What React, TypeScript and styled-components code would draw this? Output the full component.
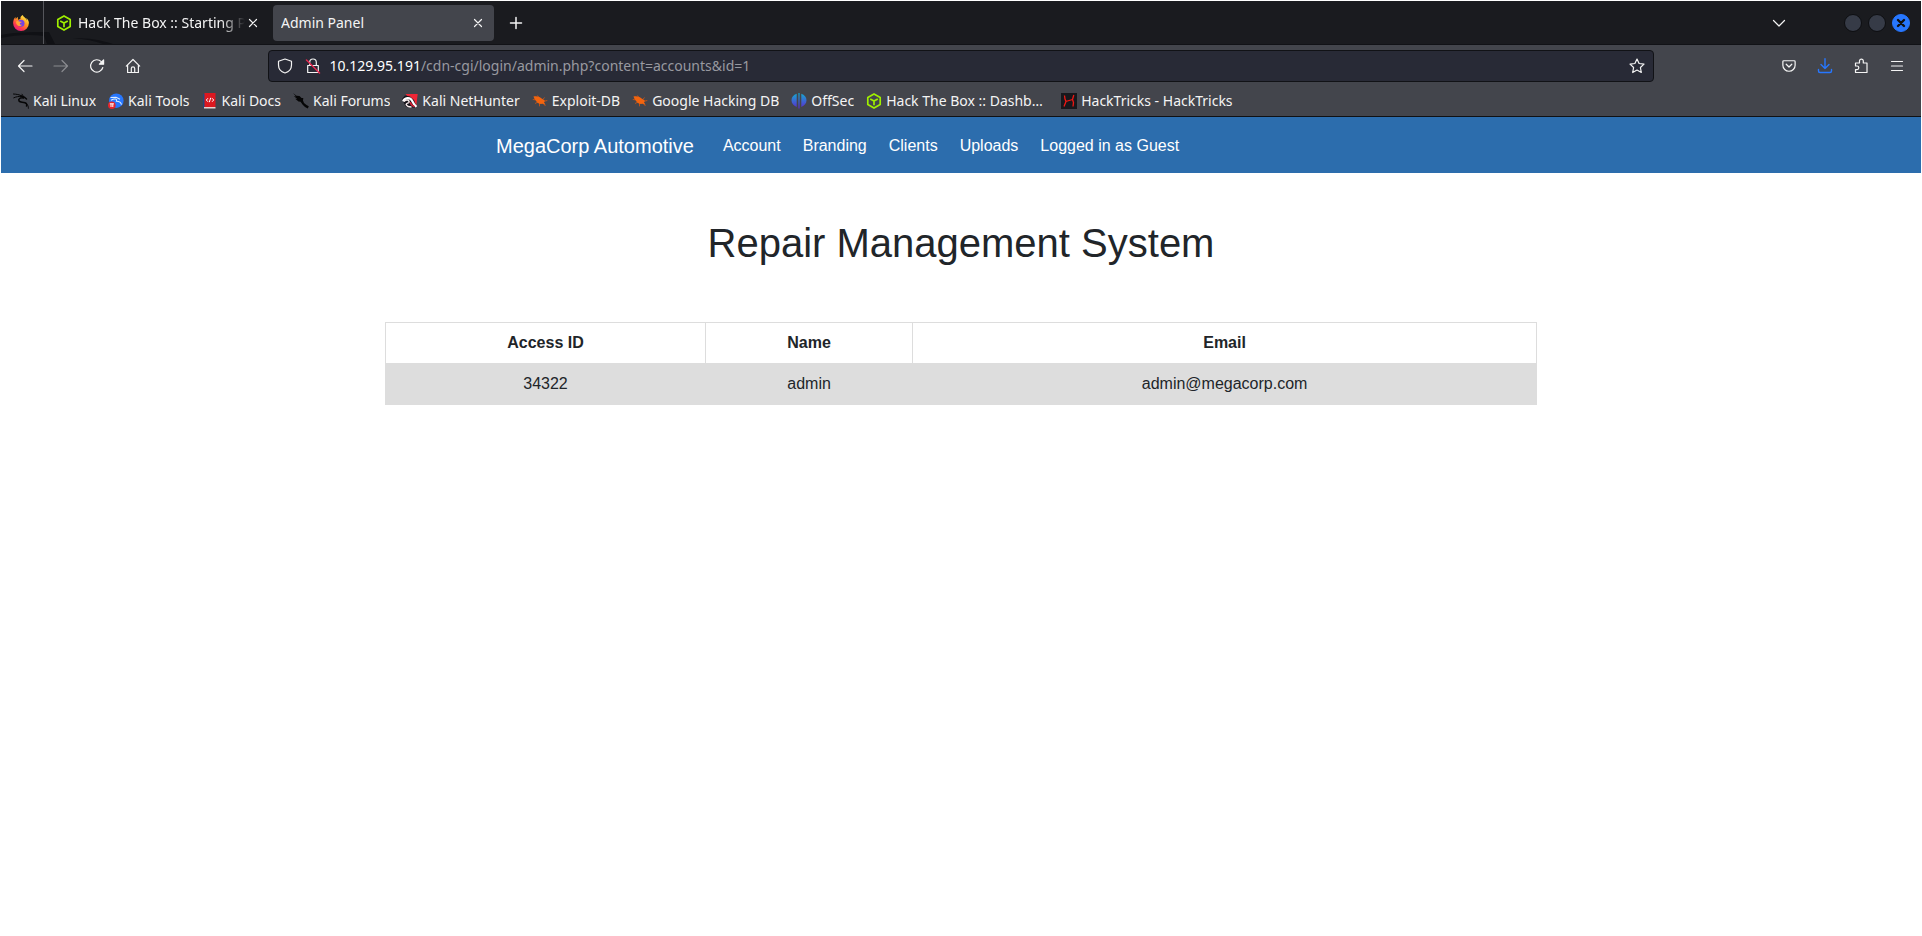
import React from "react";
import styled, { createGlobalStyle, css } from "styled-components";

const GlobalStyle = createGlobalStyle`
  *, *::before, *::after { box-sizing: border-box; }
  body { margin: 0; background: #fff; }
  button { border: 0; padding: 0; margin: 0; background: none; color: inherit; font: inherit; }
  a { color: inherit; text-decoration: none; }
`;

/* ---------- browser window ---------- */

const BrowserWindow = styled.div`
  min-height: 100vh;
  padding: 1px;
  background: #fff;
`;

const Chrome = styled.header`
  color: #f4f4f4;
  font: 14px/20px "Noto Sans", sans-serif;
  background: #43454c;
  border-bottom: 1px solid #101114;
`;

const TabStrip = styled.div`
  position: relative;
  display: flex;
  align-items: center;
  height: 44px;
  background: #1a1b1f;
  border-bottom: 1px solid #111216;
`;

const ThemeArt = styled.svg`
  position: absolute;
  left: 0;
  top: 28px;
  width: 140px;
  height: 15px;
`;

const PinnedTab = styled.button`
  position: relative;
  display: flex;
  align-items: center;
  justify-content: center;
  width: 43px;
  height: 43px;
  padding-right: 2px;
  margin-right: 4px;
  border-right: 1px solid #55565b;
`;

const Tab = styled.div<{ $active?: boolean }>`
  position: relative;
  display: flex;
  align-items: center;
  width: 221px;
  height: 36px;
  margin-right: 4px;
  padding: 0 8px;
  border-radius: 4px;
  ${(p) => p.$active && css`background: #43454c;`}
`;

const TabTitle = styled.button<{ $fade?: boolean }>`
  flex: 1;
  min-width: 0;
  margin-left: ${(p) => (p.$fade ? 6 : 0)}px;
  overflow: hidden;
  white-space: nowrap;
  text-align: left;
  ${(p) => p.$fade && css`mask-image: linear-gradient(to left, transparent, #000 24px);`}
`;

const IconButton = styled.button<{ $width?: number; $muted?: boolean; $accent?: boolean }>`
  display: flex;
  flex: none;
  align-items: center;
  justify-content: center;
  width: ${(p) => p.$width ?? 36}px;
  height: 32px;
  opacity: ${(p) => (p.$muted ? 0.4 : 1)};
  color: ${(p) => (p.$accent ? "#2777ff" : "inherit")};
`;

const CloseTab = styled(IconButton)`
  width: 16px;
  height: 16px;
`;

const StripEnd = styled.div`
  display: flex;
  align-items: center;
  margin-left: auto;
  padding-right: 11px;
`;

const WindowButtons = styled.div`
  display: flex;
  gap: 6px;
  margin-left: 47px;
`;

const WindowButton = styled.button<{ $close?: boolean }>`
  display: flex;
  align-items: center;
  justify-content: center;
  width: 18px;
  height: 18px;
  border-radius: 50%;
  border: 1px solid ${(p) => (p.$close ? "#2777ff" : "#0d0e11")};
  background: ${(p) => (p.$close ? "#2777ff" : "#363b47")};
  color: #111;
`;

const Toolbar = styled.div`
  display: flex;
  align-items: center;
  height: 41px;
  padding: 1px 6px 0;
`;

const Spring = styled.div`
  flex: 13 1 0;
`;

const AddressBar = styled.form`
  flex: 154 1 0;
  display: flex;
  align-items: center;
  height: 32px;
  padding: 0 2px;
  background: #282a36;
  border: 1px solid #111216;
  border-radius: 4px;
`;

const Host = styled.label`
  padding-left: 3px;
  color: #fff;
`;

const Path = styled.input`
  flex: 1;
  min-width: 0;
  padding: 0;
  border: 0;
  outline: 0;
  background: none;
  color: #9899a0;
  font: inherit;
`;

const Bookmarks = styled.nav`
  display: flex;
  align-items: center;
  gap: 12px;
  height: 30px;
  padding: 0 12px;
`;

const Bookmark = styled.a`
  display: flex;
  align-items: center;
  gap: 4px;
  white-space: nowrap;
`;

const BookmarkLabel = styled.span`
  max-width: 163px;
  overflow: hidden;
  text-overflow: ellipsis;
`;

/* ---------- page ---------- */

const Page = styled.div`
  color: #212529;
  font: 16px/24px "Liberation Sans", Arial, sans-serif;
`;

const Navbar = styled.nav`
  background: #2c6dad;
  color: #fff;
`;

const NavContainer = styled.div`
  display: flex;
  align-items: center;
  width: 50%;
  height: 56px;
  margin: 0 auto;
  padding: 1px 15px 0;
  white-space: nowrap;
`;

const Brand = styled.a`
  margin-right: 18px;
  font-size: 20px;
`;

const NavLink = styled.a`
  padding: 8px 11px;
`;

const Main = styled.main`
  width: 60%;
  margin: 0 auto;
  padding-top: 46px;
  text-align: center;
`;

const Title = styled.h1`
  margin: 0 0 55px;
  font-size: 40px;
  font-weight: 500;
  line-height: 48px;
`;

const AccountTable = styled.table`
  width: 100%;
  table-layout: fixed;
  border-collapse: collapse;
  tbody tr { background: #ddd; }
`;

const Column = styled.col<{ $share: number }>`
  width: ${(p) => p.$share}%;
`;

const cell = css`
  padding: 8px;
  border: 1px solid #ddd;
`;
const HeadCell = styled.th`${cell}`;
const Cell = styled.td`${cell}`;

/* ---------- icons ---------- */

type IconProps = { children: React.ReactNode; size?: number; width?: number };

const Icon = ({ children, size = 16, width = 1.2 }: IconProps) => (
  <svg width={size} height={size} viewBox="0 0 16 16" fill="none" stroke="currentColor"
    strokeWidth={width} strokeLinecap="round" strokeLinejoin="round" aria-hidden="true">
    {children}
  </svg>
);

const FirefoxIcon = () => (
  <svg width="16" height="16" viewBox="0 0 16 16" aria-hidden="true">
    <defs>
      <linearGradient id="fox" x1="0.85" y1="0.05" x2="0.2" y2="1">
        <stop offset="0" stopColor="#fff44f" />
        <stop offset="0.4" stopColor="#ff9a1f" />
        <stop offset="0.72" stopColor="#ff3b4e" />
        <stop offset="1" stopColor="#e31587" />
      </linearGradient>
    </defs>
    <path fill="url(#fox)" d="M15.500 6C15 4.800 14 3.500 13.200 3.100c.5 1 .8 1.900.9 2.600C12.800 2.600 10.700 2.300 9.600 0 7.600 1.100 7.100 3 7.500 4c-.8.1-1.500.4-2 .8-.2-.1-.4-.3-.5-.4-.2-.8-.2-1.600 0-2.300-.9.4-1.700 1.200-2.200 1.800-.3-.4-.3-1.700-.3-2C1.300 2.600.1 5.400.1 8.100a7.900 7.900 0 0 0 15.800 0c0-.8-.1-1.500-.4-2.100z" />
    <circle cx="8" cy="8.200" r="3.500" fill="#7542e5" />
    <path fill="#ffa436" d="M3.200 6.300c1.500-.7 2.500-.4 3.300.2 1 .3 2 .1 2.200.6-.3.8-1.600.7-1.900 1.400-.1.900.9 1.500 2.200 1.200-.8 1.500-3 1.900-4.300.7C3.300 9.300 2.800 7.700 3.200 6.300z" />
  </svg>
);

const BoxIcon = () => (
  <svg width="16" height="16" viewBox="0 0 16 16" fill="none" stroke="#9fef00" strokeWidth="1.700" strokeLinejoin="round" aria-hidden="true">
    <path d="M8 .9 14.200 4.400V11.600L8 15.100 1.800 11.600V4.400zM4.200 5.900 8 8 11.800 5.900M8 8V12.300" />
  </svg>
);

const KaliIcon = () => (
  <svg width="16" height="16" viewBox="0 0 16 16" fill="none" stroke="#050506" strokeLinecap="round" strokeLinejoin="round" aria-hidden="true">
    <path strokeWidth="1" d="M.5 1C3.500 1.200 6 1.500 9 3M.8 4.800C3 3.800 5.500 3.200 9 3.400" />
    <path strokeWidth="1.500" d="M8.500 3.200 11.500 4.200 13.500 6M10.500 5C7 4.300 5 6 6 8 7.200 9.800 9.500 8.800 12 9.800 14 10.600 14 12 13.500 13" />
    <path strokeWidth=".9" d="M13.500 10.800C15 12 15.400 13.500 15.400 15.300M9 1.200 10.500 3.500" />
  </svg>
);

const ToolsIcon = () => (
  <svg width="16" height="16" viewBox="0 0 16 16" aria-hidden="true">
    <circle cx="8.300" cy="7.700" r="7.300" fill="#2777ff" />
    <path d="M2.500 4.500 8 4.200 12 6.200M3 7.300C7 5 9.300 6 8.500 8.200c2.500 0 4.500 1 5 3.500" fill="none" stroke="#dcecff" strokeWidth="1.100" />
    <circle cx="3.800" cy="12.200" r="3.800" fill="#e4252c" />
    <path d="M1.800 10.800H5.900M3 10.800V14M4.800 10.800V14" stroke="#fff" strokeWidth="1" />
  </svg>
);

const DocsIcon = () => (
  <svg width="16" height="16" viewBox="0 0 16 16" aria-hidden="true">
    <path fill="#24477c" d="M1 1H3V15H1z" />
    <path fill="#dc1820" d="M2.500 0H13.500V14H2.500z" />
    <path fill="#e8d2d0" d="M2 14H13.500V15.500H2z" />
    <path d="M6 5.200 4.300 7 6 8.800M10 5.200 11.700 7 10 8.800M8.700 4.800 7.300 9.200" fill="none" stroke="#fff" strokeWidth="1" />
  </svg>
);

const ForumsIcon = () => (
  <svg width="16" height="16" viewBox="0 0 16 16" aria-hidden="true">
    <path fill="#050506" d="M0 0 3.500 2.800 6.500 3 8.500 5 10.300 5 10 7.500 11 10 13.500 12 15.800 13.200 14.800 15.500 12 14 9.500 11.500 7.500 8.800 5.500 8.500 2.200 5.800 4.200 6 .8 3 3 3.600z" />
  </svg>
);

const NetHunterIcon = () => (
  <svg width="16" height="16" viewBox="0 0 16 16" aria-hidden="true">
    <path fill="#f02636" d="M3.500 1H15.700L14.300 12.500z" />
    <path fill="#17131a" d="M0 6 3 2.500 8 3.500 12 7 14.800 14.500H9L4 14z" />
    <path d="M1.200 8.300C2.500 4.500 8 3.800 10 7.500 11.200 10 11.800 12 14.500 13.800" fill="none" stroke="#fff" strokeWidth="2.200" />
    <path d="M2 8.500C4.500 6 7.500 7 7 9.200 6.500 10.500 4.500 9.800 4.200 11.300 4.500 13 7 13.800 9.500 14" fill="none" stroke="#f6eaea" strokeWidth="1.500" />
    <path d="M8.500 9C8.200 11.500 10.500 12.700 12.500 13.700" fill="none" stroke="#d72035" strokeWidth="1.500" />
  </svg>
);

const ExploitIcon = () => (
  <svg width="16" height="16" viewBox="0 0 16 16" aria-hidden="true">
    <path d="M.8 6.500 5 7M3 10.500 7 8.500M5.500 2.500 8 6M7.500 13.300 7.500 10M12.500 4.500 10.500 7M15.300 7.500 11 8.500M13.500 13 11 10" stroke="#d8560f" strokeWidth=".8" />
    <path fill="#f2640f" d="M1.500 3.500C5 2.800 8 3.800 10 5.800L13 7.800 12 9.300 13.500 11.800 10.500 10.800C7.500 11.300 4.800 10 4 7.800L2.500 6z" />
  </svg>
);

const OffSecIcon = () => (
  <svg width="16" height="16" viewBox="0 0 16 16" aria-hidden="true">
    <defs>
      <linearGradient id="offsec" gradientUnits="userSpaceOnUse" x1="0" y1="0" x2="0" y2="16">
        <stop offset="0" stopColor="#13acd0" />
        <stop offset="0.5" stopColor="#3b67d3" />
        <stop offset="1" stopColor="#5d25c9" />
      </linearGradient>
    </defs>
    <path fill="url(#offsec)" d="M5.700 .8V14C2.500 12.500.5 10.500.5 7.300S2.500 1.800 5.700 .8zM7.400 0H8.600V15.500H7.400zM10.300 .8C13.500 1.800 15.500 4 15.500 7.300S13.500 12.500 10.300 14z" />
  </svg>
);

const HackTricksIcon = () => (
  <svg width="16" height="16" viewBox="0 0 16 16" aria-hidden="true">
    <path fill="#17181d" d="M0 0H16V16H0z" />
    <path d="M3.500 2.500 4 6 5 8.500 3 13.500M12.800 2 11.500 6.500 12.500 9.500 12 13.500M4.800 8.500 11.500 6.500" fill="none" stroke="#f01713" strokeWidth="1.300" />
  </svg>
);

const bookmarks = [
  { label: "Kali Linux", icon: <KaliIcon /> },
  { label: "Kali Tools", icon: <ToolsIcon /> },
  { label: "Kali Docs", icon: <DocsIcon /> },
  { label: "Kali Forums", icon: <ForumsIcon /> },
  { label: "Kali NetHunter", icon: <NetHunterIcon /> },
  { label: "Exploit-DB", icon: <ExploitIcon /> },
  { label: "Google Hacking DB", icon: <ExploitIcon /> },
  { label: "OffSec", icon: <OffSecIcon /> },
  { label: "Hack The Box :: Dashboard", icon: <BoxIcon /> },
  { label: "HackTricks - HackTricks", icon: <HackTricksIcon /> },
];

const navLinks = ["Account", "Branding", "Clients", "Uploads", "Logged in as Guest"];

const CrossIcon = () => <Icon><path d="M4.500 4.500 11.500 11.500M11.500 4.500 4.500 11.500" /></Icon>;

export default function App() {
  return (
    <BrowserWindow>
      <GlobalStyle />
      <Chrome>
        <TabStrip>
          <ThemeArt viewBox="0 0 140 15" aria-hidden="true">
            <path d="M0 6C14 3 30 3 48 3L54 15H46L43 7C28 5 14 6 0 9zM72 9C88 9 100 11 112 15H102C94 12 84 10 72 9z" fill="#101115" />
          </ThemeArt>
          <PinnedTab aria-label="Firefox"><FirefoxIcon /></PinnedTab>
          <Tab>
            <BoxIcon />
            <TabTitle $fade>Hack The Box :: Starting Point</TabTitle>
            <CloseTab aria-label="Close tab"><CrossIcon /></CloseTab>
          </Tab>
          <Tab $active>
            <TabTitle>Admin Panel</TabTitle>
            <CloseTab aria-label="Close tab"><CrossIcon /></CloseTab>
          </Tab>
          <IconButton aria-label="New tab"><Icon width={1.5}><path d="M8 2.500V13.500M2.500 8H13.500" /></Icon></IconButton>
          <StripEnd>
            <IconButton aria-label="List all tabs"><Icon><path d="M2.500 5.500 8 11 13.500 5.500" /></Icon></IconButton>
            <WindowButtons>
              <WindowButton aria-label="Minimize" />
              <WindowButton aria-label="Maximize" />
              <WindowButton aria-label="Close" $close>
                <Icon width={2.4}><path d="M5 5 11 11M11 5 5 11" /></Icon>
              </WindowButton>
            </WindowButtons>
          </StripEnd>
        </TabStrip>
        <Toolbar>
          <IconButton aria-label="Back"><Icon><path d="M15 8H1.500M7 2.500 1.500 8 7 13.500" /></Icon></IconButton>
          <IconButton aria-label="Forward" $muted><Icon><path d="M1 8H14.500M9 2.500 14.500 8 9 13.500" /></Icon></IconButton>
          <IconButton aria-label="Reload">
            <Icon><path d="M13.800 9.500A6.200 6.200 0 1 1 12.300 3.700" /><path d="M14.600 2V6.200H10.400z" fill="currentColor" /></Icon>
          </IconButton>
          <IconButton aria-label="Home">
            <Icon><path d="M1.300 8.200 8 1.500 14.700 8.200M2.600 7V14.500H13.400V7M6.300 14.500V10.500A1.700 1.700 0 0 1 9.700 10.500V14.500" /></Icon>
          </IconButton>
          <Spring />
          <AddressBar onSubmit={(e) => e.preventDefault()}>
            <IconButton type="button" $width={28} aria-label="Tracking protection">
              <Icon><path d="M8 1 14.500 3.300V7C14.500 11 11.500 14 8 15 4.500 14 1.500 11 1.500 7V3.300z" /></Icon>
            </IconButton>
            <IconButton type="button" $width={28} aria-label="Connection is not secure">
              <Icon>
                <path d="M2.700 7.500H13.300V14.500H2.700zM4.700 7.500V4.300A3.300 3.300 0 0 1 11.300 4.300V7.500" />
                <path d="M1.500 2 14.500 15" stroke="#e22850" strokeWidth="1.500" />
              </Icon>
            </IconButton>
            <Host htmlFor="address">10.129.95.191</Host>
            <Path id="address" type="text" defaultValue="/cdn-cgi/login/admin.php?content=accounts&id=1" />
            <IconButton type="button" $width={28} aria-label="Bookmark this page">
              <Icon><path d="M8 1 10.100 5.500 15 6.100 11.400 9.500 12.300 14.500 8 12.100 3.700 14.500 4.600 9.500 1 6.100 5.900 5.500z" /></Icon>
            </IconButton>
          </AddressBar>
          <Spring />
          <IconButton aria-label="Save to Pocket">
            <Icon size={14} width={1.4}><path d="M2 2H14A1 1 0 0 1 15 3V7A7 7 0 0 1 1 7V3A1 1 0 0 1 2 2zM4.800 6 8 9.200 11.200 6" /></Icon>
          </IconButton>
          <IconButton aria-label="Downloads" $accent>
            <Icon width={1.4}><path d="M8 .8V10.500M4 6.500 8 10.500 12 6.500M1.500 11.500V13A1.500 1.500 0 0 0 3 14.500H13A1.500 1.500 0 0 0 14.500 13V11.500" /></Icon>
          </IconButton>
          <IconButton aria-label="Extensions">
            <Icon><path d="M2.500 14.500H14V5H10.300V3A1.900 1.900 0 0 0 6.500 3V5H2.500V8H4A1.800 1.800 0 0 1 4 11.600H2.500z" /></Icon>
          </IconButton>
          <IconButton aria-label="Application menu"><Icon><path d="M2.500 3.500H13.500M2.500 8H13.500M2.500 12.500H13.500" /></Icon></IconButton>
        </Toolbar>
        <Bookmarks aria-label="Bookmarks">
          {bookmarks.map((b) => (
            <Bookmark key={b.label} href="#">
              {b.icon}
              <BookmarkLabel>{b.label}</BookmarkLabel>
            </Bookmark>
          ))}
        </Bookmarks>
      </Chrome>

      <Page>
        <Navbar aria-label="Main">
          <NavContainer>
            <Brand href="#">MegaCorp Automotive</Brand>
            {navLinks.map((label) => <NavLink key={label} href="#">{label}</NavLink>)}
          </NavContainer>
        </Navbar>
        <Main>
          <Title>Repair Management System</Title>
          <AccountTable>
            <colgroup>
              <Column $share={27.8} />
              <Column $share={18} />
              <Column $share={54.2} />
            </colgroup>
            <thead>
              <tr>
                <HeadCell scope="col">Access ID</HeadCell>
                <HeadCell scope="col">Name</HeadCell>
                <HeadCell scope="col">Email</HeadCell>
              </tr>
            </thead>
            <tbody>
              <tr>
                <Cell>34322</Cell>
                <Cell>admin</Cell>
                <Cell>admin@megacorp.com</Cell>
              </tr>
            </tbody>
          </AccountTable>
        </Main>
      </Page>
    </BrowserWindow>
  );
}
